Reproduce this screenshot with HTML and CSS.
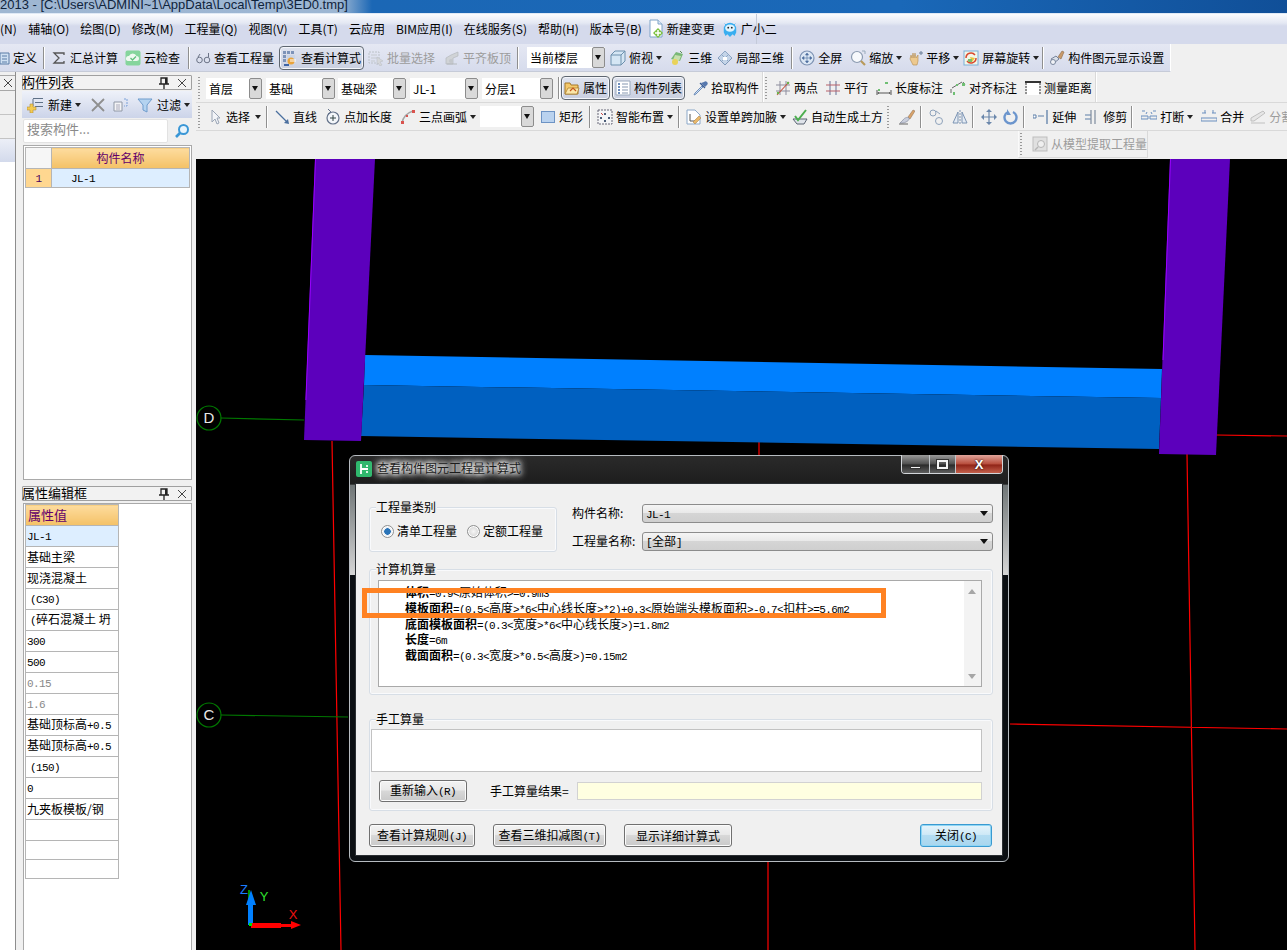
FILE: index.html
```html
<!DOCTYPE html>
<html lang="zh">
<head>
<meta charset="utf-8">
<title>工程量计算</title>
<link rel="stylesheet" href="styles.css">
</head>
<body>
<svg class="defs" xmlns="http://www.w3.org/2000/svg">
<symbol id="def" viewBox="0 0 10 16"><path d="M0 3h9v11H0z" fill="#cfe0f2" stroke="#5b7da6"/><path d="M2 6h5M2 9h5M2 12h5" stroke="#5b7da6"/></symbol>
<symbol id="sigma" viewBox="0 0 16 16"><path d="M13 5V3H3l5 5-5 5h10v-2" fill="none" stroke="#555" stroke-width="1.3"/></symbol>
<symbol id="cloud" viewBox="0 0 16 16"><rect x="0.5" y="0.5" width="15" height="15" rx="2" fill="#85d59c"/><path d="M3 11a2.500 2.500 0 0 1 1-5 4 4 0 0 1 7.500 0 2.500 2.500 0 0 1 0 5z" fill="#eef9f0"/><path d="M5.500 8l2 2 3.500-3.500" fill="none" stroke="#5fbf7c" stroke-width="1.300"/></symbol>
<symbol id="glass" viewBox="0 0 16 16"><circle cx="4.500" cy="10" r="2.800" fill="none" stroke="#6b7386"/><circle cx="12" cy="10" r="2.800" fill="none" stroke="#6b7386"/><path d="M3 7l2-3M13.500 7V3" fill="none" stroke="#6b7386"/></symbol>
<symbol id="calc" viewBox="0 0 16 16"><path d="M1 1h3v3H1zM5 1h3v3H5zM9 1h3v3H9zM1 5h3v3H1zM1 9h3v3H1z" fill="#7d93b8"/><path d="M5 5h8v5H5z" fill="#c9d4e6"/><circle cx="9" cy="11" r="3.500" fill="#e9a33a"/><path d="M2 14h5v2H2z" fill="#3e64a6"/><path d="M8 9h6v3H8z" fill="#fff" opacity=".5"/></symbol>
<symbol id="batch" viewBox="0 0 16 16"><path d="M1 2h10v11H1z" fill="none" stroke="#bcc2c8" stroke-dasharray="2 1"/><path d="M3 5h6M3 8h6M3 11h4" stroke="#c5c9ce"/><path d="M9 7l6 4-3 1 2 3-2 1-2-3-1 2z" fill="#d5d7da" stroke="#b7bbc0" stroke-width=".5"/></symbol>
<symbol id="level" viewBox="0 0 16 16"><path d="M2 14V8l5-3 7-3v4l-5 2v6z" fill="#d0d3d6" stroke="#b5b9bd" stroke-width=".7"/><path d="M3 14h10" stroke="#b5b9bd"/><circle cx="7" cy="11" r="2" fill="#c3c7cb"/></symbol>
<symbol id="cube" viewBox="0 0 16 16"><path d="M1 5l4-4h10v10l-4 4H1z" fill="#d5e6f4" stroke="#6c90ad"/><path d="M1 5h10v10M11 5l4-4" fill="none" stroke="#6c90ad"/></symbol>
<symbol id="t3d" viewBox="0 0 16 16"><path d="M2 9l5-7 7 2-3 7z" fill="#7ab877"/><path d="M6 5l6 1-2 5-6-1z" fill="#c7dfae"/><circle cx="6" cy="12" r="3" fill="#e9d35a"/><path d="M11 1l2 2" stroke="#5b8a55"/></symbol>
<symbol id="l3d" viewBox="0 0 16 16"><path d="M1 8l7-7 7 7-7 7z" fill="#c4d4e8" stroke="#7f98b8"/><path d="M4.500 4.500l7 7M8 1l7 7M4.500 11.500l7-7M1 8l7-7" stroke="#8ea6c4" fill="none"/><path d="M6 7h4v3H6z" fill="#fff"/></symbol>
<symbol id="full" viewBox="0 0 16 16"><circle cx="8" cy="8" r="7" fill="#dce7f4" stroke="#7e93b3" stroke-width="1.200"/><path d="M8 3.500v9M3.500 8h9M8 3l-1.500 2h3zM8 13l-1.500-2h3zM3 8l2-1.500v3zM13 8l-2-1.500v3z" fill="#4f6fa0" stroke="#4f6fa0" stroke-width=".6"/></symbol>
<symbol id="zoom" viewBox="0 0 16 16"><circle cx="7" cy="7" r="5.500" fill="#f7f9fc" stroke="#8b9bb0" stroke-width="1.200"/><path d="M11 11l4 4" stroke="#b89a5a" stroke-width="2.200"/><path d="M12 1h3v3" fill="none" stroke="#9ab" /></symbol>
<symbol id="hand" viewBox="0 0 16 16"><path d="M3 9l1-4 1 3 1-5 1 5 1-5 1 5 2-3v6l-1 4H6z" fill="#edc98f" stroke="#b48b4f" stroke-width=".6"/><path d="M12 3h4M14 1v4" stroke="#6b7f99"/></symbol>
<symbol id="rot" viewBox="0 0 16 16"><rect x="1" y="1" width="14" height="14" fill="#f2f6e8" stroke="#7ab0d8"/><path d="M3 8a5 5 0 0 1 9-3" fill="none" stroke="#d9482e" stroke-width="1.500"/><path d="M13 8a5 5 0 0 1-9 3" fill="none" stroke="#d9482e" stroke-width="1.500"/><path d="M7 7l5 1-3 4z" fill="#e6c63c"/><path d="M5 9h4v3H5z" fill="#7cbd6c"/></symbol>
<symbol id="cfg" viewBox="0 0 16 16"><path d="M2 9l5-3 3 3-5 4z" fill="#d9dfe9" stroke="#77839a"/><path d="M9 7l4-6 2 1-3 7z" fill="#c99a6a" stroke="#8a6a49" stroke-width=".6"/><circle cx="4" cy="12" r="2.500" fill="#f1f3f7" stroke="#7a879e"/></symbol>
<symbol id="chg" viewBox="0 0 16 20"><path d="M2 1h8l4 4v13H2z" fill="#fff" stroke="#7fa4c9"/><path d="M10 1v4h4" fill="#dce8f5" stroke="#7fa4c9"/><path d="M10 9l5 5-5 5-5-5z" fill="#7cc142"/><path d="M10 11v6M7 14h6" stroke="#fff" stroke-width="1.500"/></symbol>
<symbol id="mascot" viewBox="0 0 18 20"><path d="M3 4l2 2M15 4l-2 2" stroke="#39aef0"/><path d="M2 10a7 7 0 0 1 14 0v4l-2 4-2-2-3 3-3-3-2 2-2-4z" fill="#39aef0"/><ellipse cx="9" cy="9" rx="5.500" ry="4" fill="#dff3fd"/><circle cx="7" cy="8.500" r="1" fill="#222"/><circle cx="11" cy="8.500" r="1" fill="#222"/></symbol>
<symbol id="attr" viewBox="0 0 16 16"><path d="M1 3h5l1 2h7v9H1z" fill="#f4c86b" stroke="#a57928"/><path d="M1 14l3-6h11l-2 6z" fill="#fbe6a8" stroke="#a57928" stroke-width=".7"/><path d="M6 11l3-3 3 3" fill="none" stroke="#c6561d" stroke-width="1.200"/></symbol>
<symbol id="list" viewBox="0 0 16 16"><path d="M1 1h14v14H1z" fill="#fff" stroke="#9aa9bd"/><path d="M3 4h2M3 7h2M3 10h2M3 13h2" stroke="#3f6aa8" stroke-width="1.500"/><path d="M7 4h6M7 7h6M7 10h6M7 13h6" stroke="#8597b0"/></symbol>
<symbol id="drop" viewBox="0 0 16 16"><path d="M10 6l-7 7-1 2 2-1 7-7z" fill="#cfe0f4" stroke="#6f8fbb"/><path d="M9 3l4 4 2-2a2 2 0 0 0-3-3z" fill="#5678ae"/><path d="M8 3l5 5" stroke="#3b5e95" stroke-width="1.200"/></symbol>
<symbol id="two" viewBox="0 0 16 16"><path d="M5 1v14M11 1v14M1 5h14M1 11h14" stroke="#8d8d9d"/><path d="M2 15L14 2" stroke="#c6523e" stroke-width="1.100"/><circle cx="13" cy="3" r="1.200" fill="#69b24b"/><circle cx="3" cy="13" r="1.200" fill="#69b24b"/></symbol>
<symbol id="par" viewBox="0 0 16 16"><path d="M5 1v14M11 1v14" stroke="#7d86a6" stroke-width="1.200"/><path d="M1 5h14M1 11h14" stroke="#b8616a" stroke-width="1.200"/></symbol>
<symbol id="dim" viewBox="0 0 16 16"><path d="M1 10v5M15 10v5M2 13h12" stroke="#555" fill="none"/><path d="M2 9h2v2H2zM9 2h3v2H9z" fill="#6fbf73"/><path d="M1 13l2-1v2zM15 13l-2-1v2z" fill="#555"/></symbol>
<symbol id="adim" viewBox="0 0 16 16"><path d="M2 8l10-6M1 9v4M13 2l2 3" stroke="#666" fill="none"/><path d="M3 12h2v3H3zM12 3h3v3h-3zM6 4h2v2H6z" fill="#6fbf73"/></symbol>
<symbol id="meas" viewBox="0 0 16 16"><path d="M0 1h16v2H0z" fill="#333"/><path d="M2 3v12h12V3" fill="#fff"/><path d="M1 3v12M15 3v12" stroke="#333" stroke-dasharray="2 1"/></symbol>
<symbol id="new" viewBox="0 0 17 17"><path d="M6 2h10v1H6zM8 6h8v1H8zM8 10h8v1H8z" fill="#5f7187"/><path d="M6 3v7" stroke="#5f7187"/><path d="M3 8h3v3h3v3H6v3H3v-3H0v-3h3z" fill="#f4cb51" stroke="#b5903a" stroke-width=".6"/></symbol>
<symbol id="del" viewBox="0 0 14 14"><path d="M1 1l12 12M13 1L1 13" stroke="#8f8f8f" stroke-width="1.800"/></symbol>
<symbol id="copy" viewBox="0 0 16 16"><path d="M1 5h8v9H1z" fill="#f4f4f6" stroke="#9098a6"/><path d="M3 8h4M3 10h4M3 12h4" stroke="#aab"/><path d="M11 2h3v7h-3" fill="none" stroke="#7aa0d8" stroke-dasharray="2 1"/></symbol>
<symbol id="filter" viewBox="0 0 16 16"><path d="M1 2h14l-5 6v7l-4-2V8z" fill="#b4d3f0" stroke="#6f9ccc"/></symbol>
<symbol id="search" viewBox="0 0 16 16"><circle cx="9.500" cy="6.500" r="4.500" fill="#e8f4fc" stroke="#3a97d6" stroke-width="2"/><path d="M6 10l-4 4" stroke="#3a97d6" stroke-width="2.600"/></symbol>
<symbol id="cur" viewBox="0 0 16 16"><path d="M5 1v12l3-3 2 5 2-1-2-5h3z" fill="#f2f4f8" stroke="#9aa5b5"/></symbol>
<symbol id="line" viewBox="0 0 16 16"><path d="M2 2l11 11" stroke="#4a6f9e" stroke-width="1.300"/><path d="M15 15l-5-1 4-4z" fill="#4a6f9e"/></symbol>
<symbol id="pt" viewBox="0 0 16 16"><circle cx="8" cy="9" r="6" fill="#f3f6fa" stroke="#64728a" stroke-width="1.200"/><path d="M8 6v6M5 9h6" stroke="#344"/><path d="M3 0l3 3-3 2" fill="none" stroke="#64728a"/></symbol>
<symbol id="arc" viewBox="0 0 16 16"><path d="M2 14C3 8 7 4 13 2" fill="none" stroke="#a5a5a5" stroke-width="1.400"/><path d="M1 12h3v3H1zM12 1h3v3h-3z" fill="#d9534f"/><path d="M6 6h2v2H6z" fill="#d9534f"/></symbol>
<symbol id="rect" viewBox="0 0 16 16"><rect x="1.500" y="2.500" width="13" height="11" fill="#b9d2ef" stroke="#6d93c4"/></symbol>
<symbol id="smart" viewBox="0 0 16 16"><path d="M1 1h14v14H1z" fill="#f4f5f7" stroke="#667" stroke-dasharray="2 1"/><path d="M7 4h2v2H7zM3 8h2v2H3zM11 8h2v2h-2zM7 11h2v2H7z" fill="#4d5e78"/><path d="M4 4l2 2" stroke="#c44"/></symbol>
<symbol id="slab" viewBox="0 0 16 16"><path d="M1 1h8l5 5v9H1z" fill="#fff" stroke="#8ba8c9"/><path d="M4 5v7h7" fill="none" stroke="#555"/><path d="M7 13l6-6 2 2-6 6z" fill="#e9b86a" stroke="#a5783b" stroke-width=".5"/></symbol>
<symbol id="auto" viewBox="0 0 16 16"><path d="M1 10l4 5h7l3-5z" fill="#dfe3ea" stroke="#5b6473"/><path d="M3 7l3 4 8-10" fill="none" stroke="#4cae4f" stroke-width="2"/></symbol>
<symbol id="brush" viewBox="0 0 16 16"><path d="M9 8l5-7 2 1-5 8z" fill="#d9a36b" stroke="#8a6a49" stroke-width=".5"/><path d="M4 11c2-3 5-3 6-2s-1 4-6 5H1z" fill="#c9cedc" stroke="#7a8296" stroke-width=".6"/><path d="M0 15h9" stroke="#666"/></symbol>
<symbol id="off" viewBox="0 0 16 16"><circle cx="5" cy="4" r="3" fill="none" stroke="#8ea2bb"/><circle cx="11" cy="12" r="3.500" fill="none" stroke="#8ea2bb"/><path d="M8 2l4 3" stroke="#8ea2bb"/></symbol>
<symbol id="mir" viewBox="0 0 16 16"><path d="M6 3L1 14h5zM10 3l5 11h-5z" fill="#e4ebf4" stroke="#7c94b3"/><path d="M8 1v14" stroke="#7c94b3" stroke-dasharray="2 1"/></symbol>
<symbol id="mov" viewBox="0 0 16 16"><path d="M8 1v14M1 8h14" stroke="#6b87ab" stroke-width="1.200"/><path d="M8 0l-3 3h6zM8 16l-3-3h6zM0 8l3-3v6zM16 8l-3-3v6z" fill="#6b87ab"/></symbol>
<symbol id="rota" viewBox="0 0 16 16"><path d="M5 3a6 6 0 1 0 5 0" fill="none" stroke="#6b95cd" stroke-width="2.400"/><path d="M4 0v6h4z" fill="#6b95cd"/></symbol>
<symbol id="ext" viewBox="0 0 16 16"><path d="M0 6h3v3H0zM5 7h6" fill="#fff" stroke="#5d7fa8"/><path d="M14 1v14" stroke="#5d7fa8" stroke-width="1.300"/></symbol>
<symbol id="trim" viewBox="0 0 16 16"><path d="M1 6h6M1 10h6" stroke="#5d7fa8"/><path d="M7 1v14M11 1v14" stroke="#7e8c9e" stroke-width="1.200"/></symbol>
<symbol id="brk" viewBox="0 0 16 16"><path d="M1 2h3M12 2h3M6 3l-1 2M10 3l1 2" stroke="#6b8fbf"/><path d="M0 7h7v3H0zM9 7h7v3H9z" fill="none" stroke="#6b8fbf"/></symbol>
<symbol id="mrg" viewBox="0 0 16 16"><path d="M4 1v3M12 1v3" stroke="#6b8fbf"/><path d="M1 4h4M11 4h4M0 9h16v3H0z" fill="none" stroke="#6b8fbf"/></symbol>
<symbol id="spl" viewBox="0 0 16 16"><path d="M1 9l12-7 2 2L4 12H1zM1 14h14" fill="#e6e6e6" stroke="#c0c0c0"/></symbol>
<symbol id="mdl" viewBox="0 0 16 16"><rect x="1" y="1" width="14" height="14" fill="#e0e0e0" stroke="#bdbdbd"/><circle cx="9" cy="8" r="3.500" fill="#efefef" stroke="#b5b5b5"/><path d="M6 11l-3 3" stroke="#b5b5b5" stroke-width="1.500"/></symbol>
<symbol id="pin" viewBox="0 0 10 12"><path d="M2 1h6v6H2zM0 7h10M5 7v5" fill="none" stroke="#222" stroke-width="1.300"/><path d="M6 1h2v6H6z" fill="#222"/></symbol>
<symbol id="cls" viewBox="0 0 10 10"><path d="M1 1l8 8M9 1L1 9" stroke="#444"/></symbol>
<symbol id="app" viewBox="0 0 16 16"><rect width="16" height="16" rx="2" fill="#2fb86d"/><path d="M5 3v10M5 8h7" stroke="#fff" stroke-width="1.800"/><path d="M10 4h2v2h-2zM10 10h2v2h-2z" fill="#d8f5e4"/></symbol>
</svg>

<div class="app">
  <header class="title"><span>2013 - [C:\Users\ADMINI~1\AppData\Local\Temp\3ED0.tmp]</span></header>

  <nav class="menu">
    <div class="menu-in">
      <span class="mi first">(N)</span><span class="mi">辅轴(O)</span><span class="mi">绘图(D)</span><span class="mi">修改(M)</span><span class="mi">工程量(Q)</span><span class="mi">视图(V)</span><span class="mi">工具(T)</span><span class="mi">云应用</span><span class="mi">BIM应用(I)</span><span class="mi">在线服务(S)</span><span class="mi">帮助(H)</span><span class="mi">版本号(B)</span>
      <span class="it ml6"><svg class="ic tall"><use href="#chg"/></svg>新建变更</span>
      <span class="it ml7"><svg class="ic tall"><use href="#mascot"/></svg>广小二</span>
    </div>
  </nav>

  <div class="tb1">
    <div class="tb1-in">
      <span class="it"><svg class="ic nar"><use href="#def"/></svg>定义</span>
      <i class="sep ml6"></i>
      <span class="it ml7"><svg class="ic"><use href="#sigma"/></svg>汇总计算</span>
      <span class="it ml7"><svg class="ic"><use href="#cloud"/></svg>云检查</span>
      <i class="sep ml8"></i>
      <span class="it ml6"><svg class="ic"><use href="#glass"/></svg>查看工程量</span>
      <span class="it press ml5"><svg class="ic"><use href="#calc"/></svg>查看计算式</span>
      <span class="it off ml4"><svg class="ic"><use href="#batch"/></svg>批量选择</span>
      <span class="it off ml9"><svg class="ic"><use href="#level"/></svg>平齐板顶</span>
      <i class="sep ml6"></i>
      <span class="sel w78 ml9"><b>当前楼层</b><u></u></span>
      <span class="it ml5"><svg class="ic"><use href="#cube"/></svg>俯视</span><i class="caret"></i>
      <span class="it ml7"><svg class="ic"><use href="#t3d"/></svg>三维</span>
      <span class="it ml5"><svg class="ic"><use href="#l3d"/></svg>局部三维</span>
      <i class="sep ml7"></i>
      <span class="it ml7"><svg class="ic"><use href="#full"/></svg>全屏</span>
      <span class="it ml8"><svg class="ic"><use href="#zoom"/></svg>缩放</span><i class="caret"></i>
      <span class="it ml5"><svg class="ic"><use href="#hand"/></svg>平移</span><i class="caret"></i>
      <span class="it ml4"><svg class="ic"><use href="#rot"/></svg>屏幕旋转</span><i class="caret"></i>
      <i class="sep ml3"></i>
      <span class="it ml6"><svg class="ic"><use href="#cfg"/></svg>构件图元显示设置</span>
    </div>
  </div>

  <div class="main">
    <aside class="side">
      <div class="strip">
        <div class="strip-h"><svg class="cls"><use href="#cls"/></svg></div>
        <div class="strip-r"></div>
        <div class="strip-r"></div>
        <div class="strip-s"></div>
        <div class="strip-w"></div>
      </div>
      <div class="panels">
        <div class="ph"><span class="ph-t">构件列表</span><svg class="pin"><use href="#pin"/></svg><svg class="cls"><use href="#cls"/></svg></div>
        <div class="ptb">
          <svg class="ic17"><use href="#new"/></svg><span class="ml4">新建</span><i class="caret"></i>
          <svg class="ic14 ml10"><use href="#del"/></svg>
          <svg class="ic ml8"><use href="#copy"/></svg>
          <svg class="ic ml8"><use href="#filter"/></svg><span class="ml4">过滤</span><i class="caret"></i>
        </div>
        <div class="srch"><span class="srch-in">搜索构件...</span><svg class="ic ml6"><use href="#search"/></svg></div>
        <div class="box box1">
          <table class="tbl list">
            <tr><th class="corner"></th><th class="oh">构件名称</th></tr>
            <tr><td class="num"><span class="lat">1</span></td><td class="sel-c"><span class="lat ind">JL-1</span></td></tr>
          </table>
        </div>
        <div class="ph ph2"><span class="ph-t">属性编辑框</span><svg class="pin"><use href="#pin"/></svg><svg class="cls"><use href="#cls"/></svg></div>
        <div class="box box2">
          <table class="tbl prop">
            <tr><th class="oh left">属性值</th></tr>
            <tr><td class="sel-c"><span class="lat">JL-1</span></td></tr>
            <tr><td>基础主梁</td></tr>
            <tr><td>现浇混凝土</td></tr>
            <tr><td><span class="lat ind1">(C30)</span></td></tr>
            <tr><td><div class="clip"><span class="lat ind1">(</span>碎石混凝土 坍</div></td></tr>
            <tr><td><span class="lat">300</span></td></tr>
            <tr><td><span class="lat">500</span></td></tr>
            <tr><td class="dim"><span class="lat">0.15</span></td></tr>
            <tr><td class="dim"><span class="lat">1.6</span></td></tr>
            <tr><td><div class="clip">基础顶标高<span class="lat">+0.5</span></div></td></tr>
            <tr><td><div class="clip">基础顶标高<span class="lat">+0.5</span></div></td></tr>
            <tr><td><span class="lat ind1">(150)</span></td></tr>
            <tr><td><span class="lat">0</span></td></tr>
            <tr><td><div class="clip">九夹板模板/钢</div></td></tr>
            <tr><td></td></tr>
            <tr class="thin"><td></td></tr>
            <tr class="thin"><td></td></tr>
          </table>
        </div>
      </div>
    </aside>

    <div class="work">
      <div class="tb2">
        <i class="grip"></i>
        <span class="sel w56 ml6"><b>首层</b><u></u></span>
        <span class="sel w69 ml4"><b>基础</b><u></u></span>
        <span class="sel w68 ml3"><b>基础梁</b><u></u></span>
        <span class="sel w68 ml4"><b>JL-1</b><u></u></span>
        <span class="sel w71 ml4"><b>分层1</b><u></u></span>
        <i class="sep ml5"></i>
        <span class="it press ml2"><svg class="ic"><use href="#attr"/></svg>属性</span>
        <span class="it press ml2"><svg class="ic"><use href="#list"/></svg>构件列表</span>
        <span class="it ml7"><svg class="ic"><use href="#drop"/></svg>拾取构件</span>
        <i class="pend ml3"></i>
        <i class="grip ml2"></i>
        <span class="it ml8"><svg class="ic"><use href="#two"/></svg>两点</span>
        <span class="it ml7"><svg class="ic"><use href="#par"/></svg>平行</span>
        <span class="it ml8"><svg class="ic"><use href="#dim"/></svg>长度标注</span>
        <span class="it ml7"><svg class="ic"><use href="#adim"/></svg>对齐标注</span>
        <span class="it ml8"><svg class="ic"><use href="#meas"/></svg>测量距离</span>
        <i class="pend ml3"></i>
      </div>
      <div class="tb3">
        <i class="grip"></i>
        <span class="it ml7"><svg class="ic"><use href="#cur"/></svg>选择</span><i class="caret c5"></i>
        <i class="sep ml5"></i>
        <span class="it ml7"><svg class="ic"><use href="#line"/></svg>直线</span>
        <span class="it ml8"><svg class="ic"><use href="#pt"/></svg>点加长度</span>
        <span class="it ml8"><svg class="ic"><use href="#arc"/></svg>三点画弧</span><i class="caret"></i>
        <span class="sel w54 ml4"><b></b><u></u></span>
        <span class="it ml6"><svg class="ic"><use href="#rect"/></svg>矩形</span>
        <i class="sep ml6"></i>
        <span class="it ml7"><svg class="ic"><use href="#smart"/></svg>智能布置</span><i class="caret"></i>
        <i class="sep ml5"></i>
        <span class="it ml7"><svg class="ic"><use href="#slab"/></svg>设置单跨加腋</span><i class="caret"></i>
        <span class="it ml6"><svg class="ic"><use href="#auto"/></svg>自动生成土方</span>
        <i class="grip ml4"></i>
        <svg class="ic ml10"><use href="#brush"/></svg>
        <i class="sep ml5"></i>
        <svg class="ic ml7"><use href="#off"/></svg>
        <svg class="ic ml8"><use href="#mir"/></svg>
        <i class="sep ml4"></i>
        <svg class="ic ml8"><use href="#mov"/></svg>
        <svg class="ic ml6"><use href="#rota"/></svg>
        <i class="sep ml4"></i>
        <span class="it ml9"><svg class="ic"><use href="#ext"/></svg>延伸</span>
        <span class="it ml8"><svg class="ic"><use href="#trim"/></svg>修剪</span>
        <i class="sep ml4"></i>
        <span class="it ml9"><svg class="ic"><use href="#brk"/></svg>打断</span><i class="caret"></i>
        <span class="it ml8"><svg class="ic"><use href="#mrg"/></svg>合并</span>
        <span class="it off ml6"><svg class="ic"><use href="#spl"/></svg>分割</span>
      </div>
      <div class="tb4">
        <div class="tb4-in">
          <i class="grip"></i>
          <span class="it off ml10"><svg class="ic"><use href="#mdl"/></svg>从模型提取工程量</span>
        </div>
      </div>

      <div class="canvas">
        <svg class="scene" viewBox="196 159 1091 791" xmlns="http://www.w3.org/2000/svg">
          <path d="M332 441L341 950M759 440V456M768 862V950M1187 454L1195 950M1216 435L1287 436M1010 724L1287 729" class="red"/>
          <path d="M221 418L304 420M221 715L348 717" class="grn"/>
          <circle cx="209" cy="418" r="12" class="grn"/>
          <circle cx="209" cy="715" r="12" class="grn"/>
          <text x="209" y="423" class="axis">D</text>
          <text x="209" y="720" class="axis">C</text>
          <polygon points="365,355 1162,369 1161,398 364,385" fill="#0080ff"/>
          <polygon points="364,385 1161,398 1159,449 361,436" fill="#0060c0"/>
          <polygon points="315,159 375,159 361,441 304,440" fill="#5c00bc"/>
          <polygon points="1170,159 1230,159 1216,455 1159,454" fill="#5c00bc"/>
          <path d="M315.500 159L305.900 400M1170.500 159L1163 360" stroke="#9a00ff" stroke-width="1" fill="none"/>
          <path d="M249 925V890" stroke="#00e000" stroke-width="1.300"/>
          <path d="M249 925h5V905h3l-5-15-5 15h2z" fill="#0080ff" transform="translate(-1)"/>
          <path d="M251 923h30v1h10v-3l10 4-10 4v-2h-10v1h-30z" fill="#ff0000"/>
          <rect x="249" y="923" width="3" height="3" fill="#00e000"/>
          <text x="244" y="894" class="ax-l bl">Z</text>
          <text x="264" y="901" class="ax-l gn">Y</text>
          <text x="293" y="919" class="ax-l rd">X</text>
        </svg>

        <section class="dlg">
          <div class="dlg-t">
            <svg class="ic"><use href="#app"/></svg>
            <span class="dlg-tt">查看构件图元工程量计算式</span>
            <div class="wbtns">
              <span class="wb"><i class="w-min"></i></span>
              <span class="wb"><i class="w-max"></i></span>
              <span class="wb wc">X</span>
            </div>
          </div>
          <div class="dlg-c">
            <div class="r1">
              <div class="grp g1">
                <span class="lg">工程量类别</span>
                <span class="radio on"></span><span class="rl">清单工程量</span>
                <span class="radio ml10"></span><span class="rl">定额工程量</span>
              </div>
              <div class="r1-r">
                <div class="fld"><label class="lb">构件名称:</label><span class="cmb"><span class="lat">JL-1</span></span></div>
                <div class="fld"><label class="lb">工程量名称:</label><span class="cmb"><span class="lat">[</span>全部<span class="lat">]</span></span></div>
              </div>
            </div>
            <div class="grp g2">
              <span class="lg">计算机算量</span>
              <div class="lbx">
                <div class="lines">
                  <div><strong>体积</strong><span class="lat">=0.9&lt;</span>原始体积<span class="lat">&gt;=0.9m3</span></div>
                  <div><strong>模板面积</strong><span class="lat">=(0.5&lt;</span>高度<span class="lat">&gt;*6&lt;</span>中心线长度<span class="lat">&gt;*2)+0.3&lt;</span>原始端头模板面积<span class="lat">&gt;-0.7&lt;</span>扣柱<span class="lat">&gt;=5.6m2</span></div>
                  <div><strong>底面模板面积</strong><span class="lat">=(0.3&lt;</span>宽度<span class="lat">&gt;*6&lt;</span>中心线长度<span class="lat">&gt;)=1.8m2</span></div>
                  <div><strong>长度</strong><span class="lat">=6m</span></div>
                  <div><strong>截面面积</strong><span class="lat">=(0.3&lt;</span>宽度<span class="lat">&gt;*0.5&lt;</span>高度<span class="lat">&gt;)=0.15m2</span></div>
                </div>
                <div class="sb"><i class="up"></i><i class="dn"></i></div>
              </div>
            </div>
            <div class="grp g3">
              <span class="lg">手工算量</span>
              <div class="ta"></div>
              <div class="r3">
                <button class="btn b88">重新输入<span class="lat">(R)</span></button>
                <span class="rlb">手工算量结果=</span>
                <div class="res"></div>
              </div>
            </div>
            <div class="foot">
              <button class="btn b106">查看计算规则<span class="lat">(J)</span></button>
              <button class="btn b113">查看三维扣减图<span class="lat">(T)</span></button>
              <button class="btn b108">显示详细计算式</button>
              <button class="btn close">关闭<span class="lat">(C)</span></button>
            </div>
          </div>
          <div class="mark"></div>
        </section>
      </div>
    </div>
  </div>
</div>
</body>
</html>
```
FILE: styles.css
```css
* { box-sizing: border-box; }
html, body { margin: 0; padding: 0; }
body {
  width: 1287px; height: 950px; overflow: hidden; background: #f0f0f0; color: #000;
  font: 12px/14px "Noto Sans CJK SC", "Noto Sans", sans-serif;
}
i, u { font-style: normal; text-decoration: none; }
.defs { display: none; }
.app { width: 1287px; height: 950px; overflow: hidden; }

.ml1 { margin-left: 1px; } .ml2 { margin-left: 2px; } .ml3 { margin-left: 3px; } .ml4 { margin-left: 4px; }
.ml5 { margin-left: 5px; } .ml6 { margin-left: 6px; } .ml7 { margin-left: 7px; } .ml8 { margin-left: 8px; }
.ml9 { margin-left: 9px; } .ml10 { margin-left: 10px; }

.title {
  height: 14px; overflow: hidden; border-bottom: 1px solid #dfe9f5;
  background: linear-gradient(90deg, #9fb7d2 0, #9cb6d3 340px, #1b67b5 372px, #1a68b8 900px, #104f98 1287px);
}
.title span { display: block; margin-top: -4px; font: 13px/17px "Liberation Sans", sans-serif; color: #10243c; white-space: nowrap; }

.menu { height: 30px; background: linear-gradient(180deg, #fbfcfe 0, #e4e8f3 30%, #d5daec 40%, #d5daec 100%); }
.menu-in { display: flex; align-items: center; height: 30px; width: 757px; border-right: 1px solid #c4cad9; white-space: nowrap; }
.mi { margin-left: 11px; }
.mi.first { margin-left: 0; margin-right: 0.500px; }
.it { display: inline-flex; align-items: center; gap: 3px; white-space: nowrap; flex: none; }
.it.off { color: #9c9c9c; }
.ic { width: 16px; height: 16px; flex: none; }
.ic.nar { width: 10px; }
.ic.tall { height: 20px; }
.ic14 { width: 14px; height: 14px; flex: none; }
.ic17 { width: 17px; height: 17px; flex: none; }

.tb1 { height: 28px; background: #f0f0f0; }
.tb1-in {
  display: flex; align-items: center; height: 28px; width: 1171px; border-right: 1px solid #fff; border-bottom: 1px solid #c6cbd8;
  background: linear-gradient(180deg, #e5e8f3 0, #d6dbec 100%);
}
.sep { display: block; flex: none; width: 1px; height: 22px; background: #8f8f8f; box-shadow: 1px 0 0 #fff; }
.caret { display: block; flex: none; margin-left: 3px; width: 0; height: 0; border: 3px solid transparent; border-top: 4px solid #222; border-bottom: 0; }
.caret.c5 { margin-left: 5px; }
.press { height: 24px; padding: 0 2px; border: 1px solid #5e6670; border-radius: 4px; background: linear-gradient(180deg, #dfe3ee, #c9cfe0); box-shadow: inset 0 0 0 1px #f4f6fb; }

.sel { display: flex; flex: none; height: 21px; background: #fff; }
.sel b { flex: 1; font-weight: 400; line-height: 21px; padding-left: 3px; overflow: hidden; white-space: nowrap; }
.sel u { position: relative; flex: none; width: 13px; background: #d9d9d9; border: 1px solid #8c8c8c; border-radius: 2px; }
.sel u::after { content: ""; position: absolute; left: 2px; top: 7px; border: 3.500px solid transparent; border-top: 5px solid #111; border-bottom: 0; }
.w54 { width: 54px; } .w56 { width: 56px; } .w68 { width: 68px; } .w69 { width: 69px; } .w71 { width: 71px; } .w78 { width: 78px; }

.main { display: grid; grid-template-columns: 196px 1091px; height: 878px; }

.side { display: flex; background: #f0f0f0; overflow: hidden; }
.strip { width: 16px; flex: none; display: flex; flex-direction: column; border-right: 1px solid #8d8d8d; }
.strip-h { display: flex; align-items: center; justify-content: center; border-top: 1px solid #a8a8a8; border-bottom: 1px solid #a8a8a8; margin-top: 3px; height: 16px; }
.strip-r { height: 24px; border-bottom: 1px solid #c4c4c4; }
.strip-s { height: 23px; background: linear-gradient(180deg, #eceff7, #d3daec); }
.strip-w { flex: 1; background: #fff; }
.cls { width: 10px; height: 10px; flex: none; }
.pin { width: 10px; height: 12px; flex: none; margin-right: 8px; }

.panels { width: 170px; margin-left: 6px; flex: none; padding-top: 3px; }
.ph { display: flex; align-items: center; height: 15px; border: 1px solid #a0a0a0; border-radius: 1px; background: #f2f2f2; padding-right: 4px; }
.ph-t { flex: 1; font-size: 13px; line-height: 13px; white-space: nowrap; margin: -2px 0 0 -1px; }
.ph2 { margin-top: 6px; }
.ptb { display: flex; align-items: center; height: 27px; margin-top: 1px; padding-left: 5px; background: linear-gradient(180deg, #eef1f9, #ccd4e9); }
.srch { display: flex; align-items: center; height: 24px; margin-top: 1px; }
.srch-in { flex: none; width: 145px; height: 24px; margin-left: 1px; padding-left: 3px; background: #fff; border: 1px solid #e2e2e2; border-radius: 2px; font-size: 13px; line-height: 18px; color: #8a8a8a; }
.box { margin: 2px 0 0 1px; background: #fff; border: 1px solid #a9a9a9; padding: 1px; }
.box1 { height: 335px; }
.box2 { height: 450px; border-bottom: 0; padding-top: 0; }
.tbl { border-collapse: collapse; table-layout: fixed; background: #fff; }
.tbl th, .tbl td { border: 1px solid #b5b5b5; padding: 0; font-weight: 400; overflow: hidden; white-space: nowrap; }
.list { width: 165px; }
.list th { height: 21px; }
.list td { height: 19px; }
.corner { width: 26px; background: #f6f6f6; }
.oh { background: linear-gradient(180deg, #fddc9e, #f4c166); color: #63006b; font-size: 12px; }
.oh.left { text-align: left; padding-left: 2px !important; font-size: 13px; }
.num { background: #ffd790; text-align: center; color: #4a0060; }
.sel-c { background: #ddeeff; }
.lat { font-family: "Liberation Mono", monospace; font-size: 11px; letter-spacing: -0.600px; }
.ind { margin-left: 19px; }
.ind1 { margin-left: 3px; }
.prop { width: 94px; }
.prop th { height: 21px; }
.prop td { height: 21px; padding-left: 1px; }
.prop .thin td { height: 19px; }
.prop .dim { color: #888; }
.clip { width: 91px; overflow: hidden; white-space: nowrap; }

.work { display: flex; flex-direction: column; min-width: 0; }
.tb2, .tb3 { display: flex; align-items: center; overflow: hidden; white-space: nowrap; background: #f0f0f0; padding-left: 2px; }
.tb2 { height: 30px; padding-top: 2px; }
.tb3 { height: 29px; border-top: 1px solid #d9d9d9; border-bottom: 1px solid #d9d9d9; }
.tb4 { height: 28px; background: #f0f0f0; }
.tb4-in { display: flex; align-items: center; width: 130px; height: 27px; margin-left: 822px; padding-left: 1px; border-right: 1px solid #d9d9d9; border-bottom: 1px solid #d9d9d9; border-left: 1px solid #fafafa; }
.grip { display: block; flex: none; width: 2px; height: 22px; background: repeating-linear-gradient(180deg, #9a9a9a 0 1px, transparent 1px 3px); }
.pend { display: block; flex: none; align-self: stretch; width: 1px; margin-top: -2px; background: #d9d9d9; box-shadow: 1px 0 0 #fff; }

.canvas { position: relative; height: 791px; background: #000; overflow: hidden; }
.scene { display: block; width: 1091px; height: 791px; }
.red { stroke: #f00; stroke-width: 1.200; fill: none; }
.grn { stroke: #007800; stroke-width: 1.200; fill: none; }
.axis { font: 15px "Liberation Sans", sans-serif; fill: #e8e8e8; text-anchor: middle; }
.ax-l { font: 13px "Liberation Sans", sans-serif; text-anchor: middle; }
.bl { fill: #1a7cff; } .gn { fill: #2fe02f; } .rd { fill: #f01010; }

.dlg {
  position: absolute; left: 153px; top: 296px; width: 660px; height: 407px; padding: 0 5px 5px;
  border: 1px solid #b6bbc0; border-radius: 6px;
  background: linear-gradient(180deg, #2a2a2a 0, #1d1d1d 7%, #6f7576 7.100%, #d6d6d6 29.400%, #0b0f13 29.500%, #0b0f13 100%);
  display: flex; flex-direction: column;
}
.dlg-t { display: flex; align-items: flex-start; height: 27px; margin: 0 -5px; padding: 5px 0 0 6px; flex: none; }
.dlg-tt { margin: 0 0 0 5px; color: #1c1c1c; text-shadow: 0 0 4px #fff, 0 0 6px #fff, 0 0 8px #fff, 0 0 10px #ddd; white-space: nowrap; }
.wbtns { display: flex; position: absolute; top: -1px; right: 5px; height: 19px; border: 1px solid #d3d6da; border-top: 0; border-radius: 0 0 4px 4px; overflow: hidden; }
.wb { display: flex; align-items: center; justify-content: center; width: 28px; background: linear-gradient(180deg, #9a9a9a 0, #505050 50%, #2a2a2a 55%, #5f5f5f 100%); border-right: 1px solid #c0c4c8; }
.wb:nth-child(2) { width: 26px; }
.wc { width: 46px; border-right: 0; color: #fff; font: 700 13px "Liberation Sans", sans-serif; background: linear-gradient(180deg, #e0a49a 0, #b84d3c 50%, #8f2417 55%, #c4604c 100%); text-shadow: 0 0 2px #000; }
.w-min { width: 11px; height: 3px; margin-top: 6px; background: #f4f4f4; border: 1px solid #333; }
.w-max { width: 11px; height: 9px; border: 2px solid #f4f4f4; outline: 1px solid #333; }

.dlg-c { position: relative; flex: 1; padding: 20px 9px 0 13px; background: #f0f0f0; border: 1px solid #2b2f33; }
.grp { position: relative; border: 1px solid #d7dee6; border-radius: 3px; box-shadow: inset 0 0 0 1px #f9fafc; }
.lg { position: absolute; left: 6px; top: -8px; padding-right: 1px; background: #f0f0f0; line-height: 14px; white-space: nowrap; }
.r1 { display: flex; height: 48px; }
.g1 { display: flex; align-items: center; width: 188px; height: 45px; margin-top: 3px; padding: 3px 0 0 11px; flex: none; }
.radio { flex: none; width: 13px; height: 13px; border-radius: 50%; border: 1px solid #8e8f8f; background: radial-gradient(circle, #f6f6f6, #c9c9c9); box-shadow: inset 0 0 0 1px #fff; }
.radio.on { background: radial-gradient(circle, #2a74b8 0 3px, #e8eef5 3.500px); }
.rl { margin-left: 3px; white-space: nowrap; }
.r1-r { margin-left: 15px; flex: 1; display: flex; flex-direction: column; gap: 9px; }
.fld { display: flex; align-items: center; height: 19px; }
.lb { flex: none; width: 70px; white-space: nowrap; margin-top: -2px; }
.cmb { position: relative; flex: 1; display: block; height: 19px; line-height: 15px; padding-left: 3px; border: 1px solid #8c8c8c; border-radius: 3px; background: linear-gradient(180deg, #f5f5f5 0, #e9e9e9 45%, #d5d5d5 50%, #cfcfcf 100%); }
.cmb::after { content: ""; position: absolute; right: 4px; top: 6px; border: 4px solid transparent; border-top: 5px solid #111; border-bottom: 0; }
.g2 { height: 126px; margin-top: 17px; padding: 10px 10px 0 8px; }
.lbx { display: flex; height: 107px; background: #fff; border: 1px solid #a9a9a9; overflow: hidden; }
.lines { flex: 1; padding: 3px 0 0 26px; white-space: nowrap; overflow: hidden; }
.lines div { height: 15.750px; line-height: 15.750px; overflow: visible; }
.lines strong { font-weight: 700; }
.sb { position: relative; flex: none; width: 17px; background: #f3f3f3; }
.up, .dn { position: absolute; left: 4px; border: 4.500px solid transparent; }
.up { top: 8px; border-top: 0; border-bottom: 5px solid #a6a6a6; }
.dn { bottom: 7px; border-bottom: 0; border-top: 5px solid #a6a6a6; }
.g3 { height: 92px; margin-top: 24px; padding: 9px 10px 0 1px; }
.ta { height: 43px; background: #fff; border: 1px solid #c2c2c2; }
.r3 { display: flex; align-items: center; height: 22px; margin-top: 8px; padding-left: 8px; }
.btn { display: block; flex: none; height: 23px; padding: 0; font: inherit; color: #000; text-align: center; border: 1px solid #707070; border-radius: 3px; background: linear-gradient(180deg, #f3f3f3 0, #e9e9e9 45%, #d8d8d8 50%, #c9c9c9 100%); box-shadow: inset 0 0 0 1px #fbfbfb; }
.b88 { width: 88px; height: 22px; }
.b106 { width: 106px; } .b113 { width: 113px; margin-left: 18px; } .b108 { width: 108px; margin-left: 18px; }
.rlb { margin-left: 23px; width: 87px; flex: none; white-space: nowrap; }
.res { flex: 1; height: 18px; background: #ffffe1; border: 1px solid #d2d2d2; }
.foot { display: flex; margin-top: 13px; }
.close { width: 72px; margin-left: auto; margin-right: 1px; border-color: #3a9ad1; background: linear-gradient(180deg, #e6f4fb 0, #cfe9f7 45%, #b3dcf2 50%, #a9d6ee 100%); box-shadow: inset 0 0 0 1px #8fd6f5; }

.mark { position: absolute; left: 12px; top: 132px; width: 524px; height: 30px; border: 5px solid #ff8222; }
```
